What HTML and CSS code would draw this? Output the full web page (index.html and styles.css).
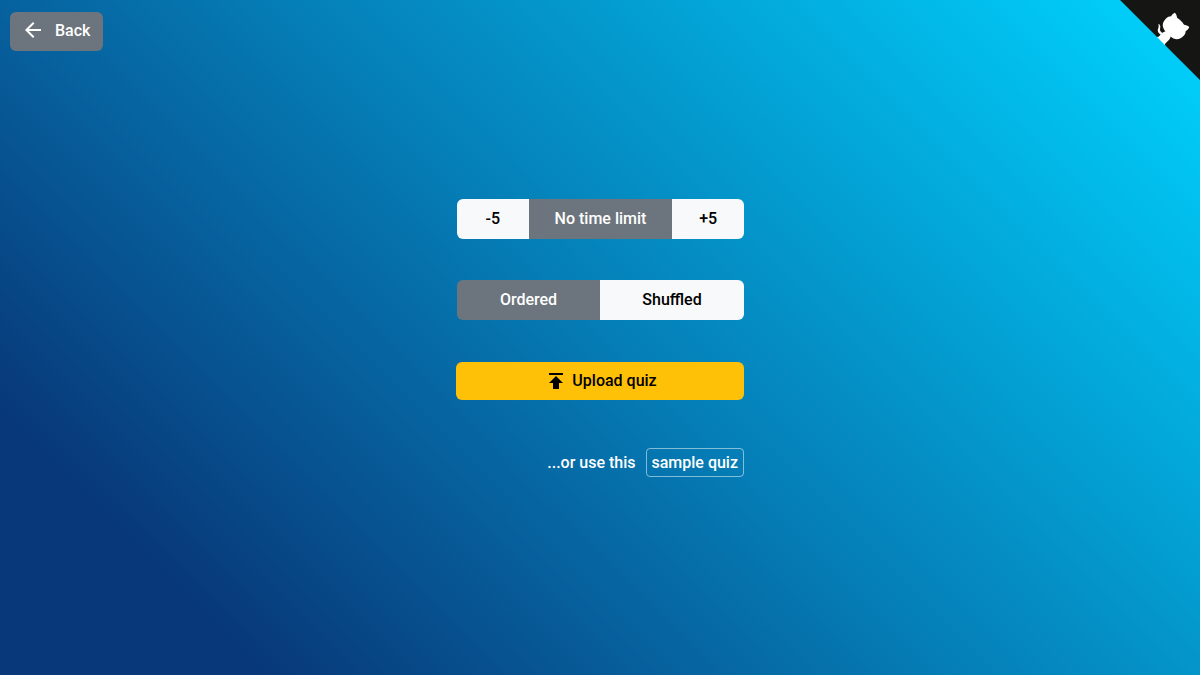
FILE: index.html
```html
<!DOCTYPE html>
<html lang="en">
<head>
<meta charset="utf-8">
<meta name="viewport" content="width=device-width, initial-scale=1">
<title>Quiz</title>
<link rel="stylesheet" href="styles.css">
</head>
<body>
<header class="topbar">
  <button type="button" class="btn btn-secondary btn-back">
    <svg class="icon-back" viewBox="0 1 24 24" aria-hidden="true"><path d="M20 11H7.83l5.59-5.59L12 4l-8 8 8 8 1.41-1.41L7.83 13H20z"/></svg>
    Back
  </button>
</header>
<a class="github-corner" href="#" aria-label="View source on GitHub">
  <svg viewBox="0 0 250 250" aria-hidden="true">
    <path class="corner" d="M0,0 L115,115 L130,115 L142,142 L250,250 L250,0 Z"/>
    <path class="octo" d="M128.3,109.0 C113.8,99.7 119.0,89.6 119.0,89.6 C122.0,82.7 120.5,78.6 120.5,78.6 C119.2,72.0 123.4,76.3 123.4,76.3 C127.3,80.9 125.5,87.3 125.5,87.3 C122.9,97.6 130.6,101.9 134.4,103.2"/>
    <path class="octo" d="M115.0,115.0 C114.9,115.1 118.7,116.5 119.8,115.4 L133.7,101.6 C136.9,99.2 139.9,98.4 142.2,98.6 C133.8,88.0 127.5,74.4 143.8,58.0 C148.5,53.4 154.0,51.2 159.7,51.0 C160.3,49.4 163.2,43.6 171.4,40.1 C171.4,40.1 176.1,42.5 178.8,56.2 C183.1,58.6 187.2,61.8 190.9,65.4 C194.5,69.0 197.7,73.2 200.1,77.6 C213.8,80.2 216.3,84.9 216.3,84.9 C212.7,93.1 206.9,96.0 205.4,96.6 C205.1,102.4 203.0,107.8 198.3,112.5 C181.9,128.9 168.3,122.5 157.7,114.1 C157.9,116.9 156.7,120.9 152.7,124.9 L141.0,136.5 C139.8,137.7 141.6,141.9 141.8,141.8 Z"/>
  </svg>
</a>
<main class="setup">
  <div class="options">
    <div class="group group-time">
      <button type="button" class="btn btn-light">-5</button>
      <button type="button" class="btn btn-secondary">No time limit</button>
      <button type="button" class="btn btn-light">+5</button>
    </div>
    <div class="group group-order">
      <button type="button" class="btn btn-secondary">Ordered</button>
      <button type="button" class="btn btn-light">Shuffled</button>
    </div>
    <button type="button" class="btn btn-warning">
      <svg class="icon-upload" viewBox="0 0 14 16" aria-hidden="true"><path d="M0 0h14v2H0zM7 3l7 7h-4v6H4v-6H0z"/></svg>
      Upload quiz
    </button>
    <p class="sample">...or use this <button type="button" class="btn btn-sample">sample quiz</button></p>
  </div>
</main>
</body>
</html>
```
FILE: styles.css
```css
* {
  box-sizing: border-box;
}

body {
  margin: 0;
  min-height: 100vh;
  display: flex;
  flex-direction: column;
  font: 500 16px/24px Roboto, sans-serif;
  color: #fff;
  background: linear-gradient(45deg, #083879 14%, #057cb5 50%, #00d4ff 100%) no-repeat;
}

.topbar {
  display: flex;
  padding: 12px 10px 0;
}

.btn {
  display: inline-flex;
  align-items: center;
  justify-content: center;
  border: 0;
  padding: 8px 12px;
  border-radius: 6px;
  font: inherit;
  cursor: pointer;
}

.btn-secondary {
  background: #6c757d;
  color: #fff;
}

.btn-light {
  background: #f8f9fa;
  color: #000;
}

.btn-warning {
  margin-top: 1px;
  padding: 7px 12px 7px 18px;
  gap: 9px;
  background: #ffc107;
  color: #000;
}

.btn-back {
  gap: 10px;
  padding: 7px 13px 8px 11px;
}

.icon-back {
  width: 24px;
  height: 24px;
  fill: #fff;
}

.icon-upload {
  width: 14px;
  height: 16px;
}

.github-corner {
  position: absolute;
  top: 0;
  right: 0;
}

.github-corner svg {
  display: block;
  width: 80px;
  height: 80px;
}

.corner {
  fill: #151513;
}

.octo {
  fill: #fff;
}

.setup {
  flex: 1;
  display: flex;
  justify-content: center;
  align-items: center;
  padding-bottom: 50px;
}

.options {
  display: grid;
  gap: 41px;
  width: 288px;
  max-width: 100%;
}

.group {
  display: grid;
  padding-left: 1px;
}

.group-time {
  grid-template-columns: 1fr 2fr 1fr;
}

.group-order {
  grid-template-columns: 143px 1fr;
}

.group .btn {
  border-radius: 0;
}

.group .btn:first-child {
  border-radius: 6px 0 0 6px;
}

.group .btn:last-child {
  border-radius: 0 6px 6px 0;
}

.sample {
  display: flex;
  align-items: baseline;
  justify-content: flex-end;
  gap: 10px;
  margin: 7px 0 0;
}

.btn-sample {
  padding: 2px 5px 1px;
  border: 1px solid rgba(255, 255, 255, 0.5);
  border-radius: 4px;
  background: transparent;
  color: #fff;
}
```
